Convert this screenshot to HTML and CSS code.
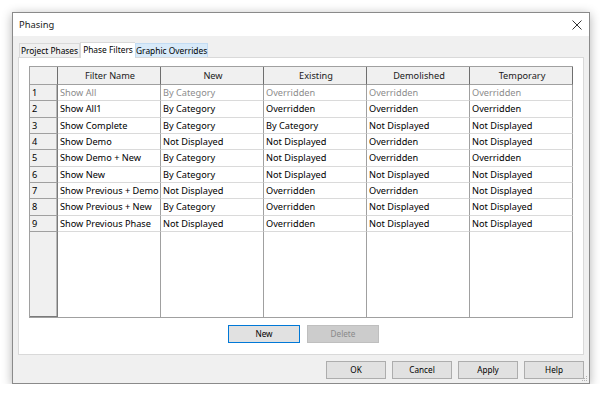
FILE: index.html
```html
<!DOCTYPE html>
<html lang="en">
<head>
    <meta charset="UTF-8">
    <title>Phasing</title>
    <link rel="stylesheet" href="styles.css">
</head>
<body>
    <div class="dialog">
        <!-- Title Bar -->
        <div class="titlebar">
            <span class="title">Phasing</span>
            <svg class="close" width="10" height="10" viewBox="0 0 10 10">
                <path d="M0.5 0.5 L9.5 9.5 M9.5 0.5 L0.5 9.5" stroke="#333" stroke-width="1" fill="none"/>
            </svg>
        </div>

        <div class="content">
            <!-- Tabs -->
            <div class="tabs">
                <div class="tab t1">Project Phases</div>
                <div class="tab t2 active">Phase Filters</div>
                <div class="tab t3 hover">Graphic Overrides</div>
            </div>

            <!-- Tab Panel -->
            <div class="panel">
                <div class="grid">
                    <div class="hd corner"></div>
                    <div class="hd">Filter Name</div>
                    <div class="hd">New</div>
                    <div class="hd">Existing</div>
                    <div class="hd">Demolished</div>
                    <div class="hd">Temporary</div>

                    <div class="rn">1</div>
                    <div class="c ro">Show All</div>
                    <div class="c ro">By Category</div>
                    <div class="c ro">Overridden</div>
                    <div class="c ro">Overridden</div>
                    <div class="c ro">Overridden</div>

                    <div class="rn">2</div>
                    <div class="c">Show All1</div>
                    <div class="c">By Category</div>
                    <div class="c">Overridden</div>
                    <div class="c">Overridden</div>
                    <div class="c">Overridden</div>

                    <div class="rn">3</div>
                    <div class="c">Show Complete</div>
                    <div class="c">By Category</div>
                    <div class="c">By Category</div>
                    <div class="c">Not Displayed</div>
                    <div class="c">Not Displayed</div>

                    <div class="rn">4</div>
                    <div class="c">Show Demo</div>
                    <div class="c">Not Displayed</div>
                    <div class="c">Not Displayed</div>
                    <div class="c">Overridden</div>
                    <div class="c">Not Displayed</div>

                    <div class="rn">5</div>
                    <div class="c">Show Demo + New</div>
                    <div class="c">By Category</div>
                    <div class="c">Not Displayed</div>
                    <div class="c">Overridden</div>
                    <div class="c">Overridden</div>

                    <div class="rn">6</div>
                    <div class="c">Show New</div>
                    <div class="c">By Category</div>
                    <div class="c">Not Displayed</div>
                    <div class="c">Not Displayed</div>
                    <div class="c">Not Displayed</div>

                    <div class="rn">7</div>
                    <div class="c">Show Previous + Demo</div>
                    <div class="c">Not Displayed</div>
                    <div class="c">Overridden</div>
                    <div class="c">Overridden</div>
                    <div class="c">Not Displayed</div>

                    <div class="rn">8</div>
                    <div class="c">Show Previous + New</div>
                    <div class="c">By Category</div>
                    <div class="c">Overridden</div>
                    <div class="c">Not Displayed</div>
                    <div class="c">Not Displayed</div>

                    <div class="rn">9</div>
                    <div class="c">Show Previous Phase</div>
                    <div class="c">Not Displayed</div>
                    <div class="c">Overridden</div>
                    <div class="c">Not Displayed</div>
                    <div class="c">Not Displayed</div>

                    <!-- Empty space below the rows -->
                    <div class="rn filler"></div>
                    <div class="c filler"></div>
                    <div class="c filler"></div>
                    <div class="c filler"></div>
                    <div class="c filler"></div>
                    <div class="c filler"></div>
                </div>

                <div class="panel-buttons">
                    <button class="btn focus">New</button>
                    <button class="btn" disabled>Delete</button>
                </div>
            </div>

            <!-- Dialog Buttons -->
            <div class="footer">
                <button class="btn">OK</button>
                <button class="btn">Cancel</button>
                <button class="btn">Apply</button>
                <button class="btn">Help</button>
            </div>
        </div>

        <svg class="grip" width="6" height="6" viewBox="0 0 6 6">
            <rect x="4" y="0" width="1" height="1" fill="#b0b0b0"/>
            <rect x="2" y="2" width="1" height="1" fill="#b0b0b0"/>
            <rect x="4" y="2" width="1" height="1" fill="#b0b0b0"/>
            <rect x="0" y="4" width="1" height="1" fill="#b0b0b0"/>
            <rect x="2" y="4" width="1" height="1" fill="#b0b0b0"/>
            <rect x="4" y="4" width="1" height="1" fill="#b0b0b0"/>
        </svg>
    </div>
</body>
</html>
```

FILE: styles.css
```css
/* General Styling */
* {
    box-sizing: border-box;
    margin: 0;
    padding: 0;
}

body {
    background: #ffffff;
    font-family: 'Noto Sans', 'Open Sans', sans-serif;
    font-size: 9.2px;
    color: #000000;
}

/* Dialog Window */
.dialog {
    position: relative;
    width: 578px;
    height: 372px;
    margin: 12px 0 0 12px;
    border: 1px solid #8a8a8a;
    background: #f0f0f0;
    box-shadow: 0 2px 10px rgba(0, 0, 0, 0.3);
    display: flex;
    flex-direction: column;
}

.titlebar {
    height: 23px;
    background: #ffffff;
    display: flex;
    align-items: center;
    justify-content: space-between;
    padding: 0 7px 0 6px;
}

.title {
    font-size: 9.4px;
    line-height: 14px;
    color: #1a1a1a;
}

.content {
    padding: 0 5px;
}

/* Tabs */
.tabs {
    height: 21px;
    display: flex;
    align-items: flex-end;
    padding-left: 1px;
}

.tab {
    height: 14px;
    line-height: 13px;
    text-align: center;
    border: 1px solid #d9d9d9;
    border-bottom: none;
    background: #f0f0f0;
    font-size: 8.4px;
    white-space: nowrap;
}

.t1 { width: 61px; }
.t2 { width: 55px; }
.t3 { width: 73px; }

.tab.active {
    height: 16px;
    background: #ffffff;
    line-height: 13px;
    position: relative;
    top: 1px;
    border-right: none;
}

.tab.hover {
    background: #d8eaf9;
    border-color: #c3dcf3;
}

/* Tab Panel */
.panel {
    height: 298px;
    background: #ffffff;
    border: 1px solid #d9d9d9;
    padding: 8px 0 0 10px;
}

/* Phase Filter Grid */
.grid {
    display: grid;
    grid-template-columns: 28px repeat(5, 103px);
    grid-template-rows: 18px repeat(9, 16.33px) 1fr;
    width: 544px;
    height: 252px;
    border: 1px solid #a0a0a0;
    border-right: none;
}

.hd, .rn, .c {
    border-right: 1px solid #a0a0a0;
    border-bottom: 1px solid #dadada;
    padding-left: 2px;
    white-space: nowrap;
    overflow: hidden;
    line-height: 15px;
}

.hd {
    background: #f0f0f0;
    text-align: center;
    border-right-color: #6e6e6e;
    border-bottom-color: #a0a0a0;
    line-height: 17px;
    color: #1a1a1a;
}

.rn {
    background: #f0f0f0;
    border-right-color: #7a7a7a;
    border-bottom-color: #a0a0a0;
    box-shadow: inset -1px 0 0 #b8b8b8;
}

.c.ro {
    color: #8c8c8c;
}

.filler {
    border-bottom: none;
}

.rn.filler {
    border-bottom: 1px solid #7a7a7a;
}

/* Buttons */
.btn {
    height: 18px;
    font-family: inherit;
    font-size: 8.2px;
    line-height: 16px;
    background: #e1e1e1;
    border: 1px solid #adadad;
    color: #000000;
}

.btn.focus {
    border-color: #0078d7;
}

.btn:disabled {
    background: #cccccc;
    border-color: #bfbfbf;
    color: #8a8a8a;
}

.panel-buttons {
    display: flex;
    justify-content: center;
    gap: 7px;
    margin-top: 7px;
    padding-right: 5px;
}

.panel-buttons .btn {
    width: 72px;
}

.footer {
    display: flex;
    justify-content: flex-end;
    gap: 6px;
    margin-top: 6px;
    padding-right: 0;
}

.footer .btn {
    width: 60px;
}

.grip {
    position: absolute;
    right: 1px;
    bottom: 1px;
}
```
